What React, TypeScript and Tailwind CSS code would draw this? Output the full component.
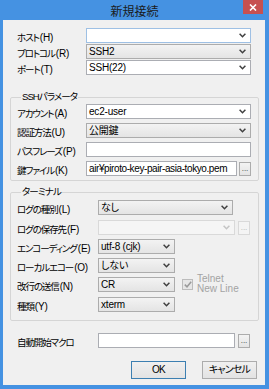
import { ReactNode } from "react";

const font = "font-['Liberation_Sans','Noto_Sans_CJK_JP',sans-serif] [font-feature-settings:'palt']";

const Chevron = ({ color = "#404040" }: { color?: string }) => (
  <svg width="7" height="5" viewBox="0 0 7 5" className="shrink-0">
    <path d="M0.6 0.8 L3.5 3.7 L6.4 0.8" stroke={color} strokeWidth="1.5" fill="none" />
  </svg>
);

type ComboProps = {
  value?: string;
  kind?: "edit" | "list" | "off";
  width: string;
  focus?: boolean;
};

const Combo = ({ value = "", kind = "edit", width, focus }: ComboProps) => {
  const look =
    kind === "edit"
      ? focus
        ? "bg-white border-[#9ec0e4]"
        : "bg-white border-[#abadb3]"
      : kind === "list"
        ? "bg-gradient-to-b from-[#f3f3f3] to-[#e4e4e4] border-[#acacac]"
        : "bg-[#f5f5f5] border-[#d9d9d9]";
  return (
    <div className={`${width} h-[15px] border ${look} flex items-center justify-between pl-[2px] pr-[4px]`}>
      <span className="text-[10px] leading-none text-black whitespace-nowrap tracking-[-0.2px]">{value}</span>
      <Chevron color={kind === "off" ? "#c4c4c4" : "#404040"} />
    </div>
  );
};

const TextBox = ({ value = "", width }: { value?: string; width: string }) => (
  <div className={`${width} h-[15px] border border-[#abadb3] bg-white flex items-center pl-[2px] overflow-hidden`}>
    <span className="text-[10px] leading-none text-black whitespace-nowrap tracking-[-0.4px]">{value}</span>
  </div>
);

const Dots = ({ off }: { off?: boolean }) => (
  <div
    className={`w-[12px] h-[14px] border flex items-end justify-center pb-[2px] ${
      off ? "border-[#d9d9d9] bg-[#f4f4f4]" : "border-[#acacac] bg-gradient-to-b from-[#f3f3f3] to-[#e4e4e4]"
    }`}
  >
    <span className={`text-[8px] leading-none ${off ? "text-[#b0b0b0]" : "text-[#333]"}`}>...</span>
  </div>
);

// japanese part is squeezed, the "(X)" key part keeps its normal spacing
const Label = ({ text }: { text: string }) => {
  const i = text.indexOf("(");
  const jp = i < 0 ? text : text.slice(0, i);
  const key = i < 0 ? "" : text.slice(i);
  return (
    <span className="whitespace-nowrap leading-none text-black">
      <span className="text-[9.5px] tracking-[-1.1px]">{jp}</span>
      <span className="text-[10px] tracking-[-0.2px] ml-[1px]">{key}</span>
    </span>
  );
};

const Row = ({ label, labelW, children }: { label: string; labelW: string; children: ReactNode }) => (
  <div className="flex items-center h-[15px]">
    <div className={`${labelW} shrink-0 flex items-center`}>
      <Label text={label} />
    </div>
    {children}
  </div>
);

const Group = ({ title, className, children }: { title: string; className: string; children: ReactNode }) => (
  <fieldset className={`border border-[#d5d5d5] rounded-[2px] ml-[7px] mr-[6px] pl-[6px] pr-[7px] ${className}`}>
    <legend className="ml-[4px] px-[1px] text-[9.5px] leading-[12px] text-black tracking-[-0.9px]">{title}</legend>
    {children}
  </fieldset>
);

const Button = ({ label, primary }: { label: string; primary?: boolean }) => (
  <div
    className={`w-[55px] h-[18px] border flex items-center justify-center bg-gradient-to-b from-[#f0f0f0] to-[#e3e3e3] text-[10px] leading-none text-black tracking-[-0.8px] ${
      primary ? "border-[#3c7fb1]" : "border-[#acacac]"
    }`}
  >
    {label}
  </div>
);

export default function App() {
  return (
    <div className={`w-[269px] h-[389px] bg-[#4592e2] flex flex-col ${font}`}>
      <div className="h-[20px] relative flex items-center justify-center">
        <span className="text-[12px] leading-none text-[#1b1b1b] mt-[3px]">新規接続</span>
        <div className="absolute right-[6px] top-0 w-[20px] h-[14px] bg-[#c75050] flex items-center justify-center">
          <svg width="8" height="7" viewBox="0 0 8 7">
            <path d="M1 0.5 L7 6.5 M7 0.5 L1 6.5" stroke="white" strokeWidth="1.6" />
          </svg>
        </div>
      </div>

      <div className="flex-1 ml-[3px] mr-[4px] mb-[4px] bg-[#f0f0f0] flex flex-col">
        <div className="pt-[8px] pl-[14px] flex flex-col gap-[1px]">
          <Row label="ホスト(H)" labelW="w-[69px]">
            <Combo width="w-[165px]" focus />
          </Row>
          <Row label="プロトコル(R)" labelW="w-[69px]">
            <Combo width="w-[165px]" kind="list" value="SSH2" />
          </Row>
          <Row label="ポート(T)" labelW="w-[69px]">
            <Combo width="w-[165px]" value="SSH(22)" />
          </Row>
        </div>

        <Group title="SSHパラメータ" className="mt-[16px] pt-[1px] pb-[4px]">
          <div className="flex flex-col gap-[4px]">
            <Row label="アカウント(A)" labelW="w-[69px]">
              <Combo width="w-[165px]" value="ec2-user" />
            </Row>
            <Row label="認証方法(U)" labelW="w-[69px]">
              <Combo width="w-[165px]" kind="list" value="公開鍵" />
            </Row>
            <Row label="パスフレーズ(P)" labelW="w-[69px]">
              <TextBox width="w-[165px]" />
            </Row>
            <Row label="鍵ファイル(K)" labelW="w-[69px]">
              <TextBox width="w-[151px]" value="air¥piroto-key-pair-asia-tokyo.pem" />
              <div className="ml-[2px]">
                <Dots />
              </div>
            </Row>
          </div>
        </Group>

        <Group title="ターミナル" className="mt-[5px] pt-[2px] pb-[8px]">
          <div className="flex flex-col">
            <Row label="ログの種別(L)" labelW="w-[81px]">
              <Combo width="w-[135px]" kind="list" value="なし" />
            </Row>
            <div className="mt-[5px]">
              <Row label="ログの保存先(F)" labelW="w-[81px]">
                <Combo width="w-[137px]" kind="off" />
                <div className="ml-[3px]">
                  <Dots off />
                </div>
              </Row>
            </div>
            <div className="mt-[4px]">
              <Row label="エンコーディング(E)" labelW="w-[81px]">
                <Combo width="w-[77px]" kind="list" value="utf-8 (cjk)" />
              </Row>
            </div>
            <div className="mt-[4px]">
              <Row label="ローカルエコー(O)" labelW="w-[81px]">
                <Combo width="w-[77px]" kind="list" value="しない" />
              </Row>
            </div>
            <div className="mt-[4px]">
              <Row label="改行の送信(N)" labelW="w-[81px]">
                <Combo width="w-[77px]" kind="list" value="CR" />
                <div className="ml-[7px] w-[11px] h-[11px] border border-[#bcbcbc] bg-[#e6e6e6] flex items-center justify-center">
                  <svg width="8" height="7" viewBox="0 0 8 7">
                    <path d="M0.8 3.6 L3 5.8 L7.2 0.8" stroke="#9a9a9a" strokeWidth="1.5" fill="none" />
                  </svg>
                </div>
                <div className="ml-[4px] flex flex-col text-[10px] leading-[10px] text-[#a3a3a3] -mt-[1px]">
                  <span>Telnet</span>
                  <span>New Line</span>
                </div>
              </Row>
            </div>
            <div className="mt-[5px]">
              <Row label="種類(Y)" labelW="w-[81px]">
                <Combo width="w-[77px]" kind="list" value="xterm" />
              </Row>
            </div>
          </div>
        </Group>

        <div className="mt-[12px] pl-[14px]">
          <Row label="自動開始マクロ" labelW="w-[81px]">
            <TextBox width="w-[137px]" />
            <div className="ml-[3px]">
              <Dots />
            </div>
          </Row>
        </div>

        <div className="mt-[13px] flex justify-end gap-[16px] pr-[8px]">
          <Button label="OK" primary />
          <Button label="キャンセル" />
        </div>
      </div>
    </div>
  );
}
